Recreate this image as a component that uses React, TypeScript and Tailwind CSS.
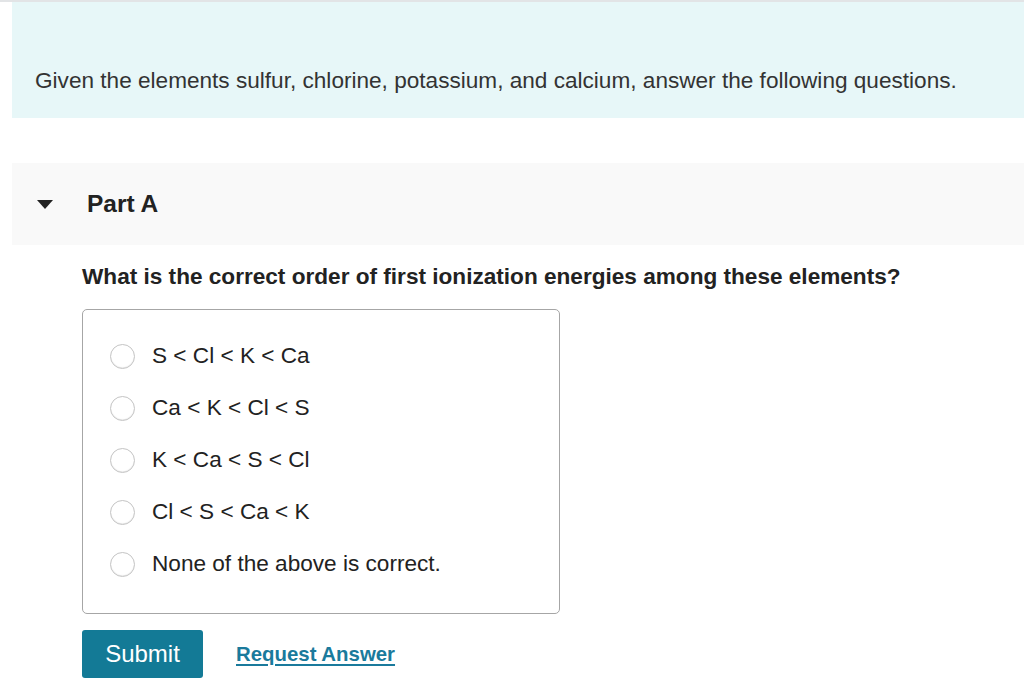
import React from 'react';

const OPTIONS = [
    'S < Cl < K < Ca',
    'Ca < K < Cl < S',
    'K < Ca < S < Cl',
    'Cl < S < Ca < K',
    'None of the above is correct.',
];

export default function App() {
    return (
        <div className="w-[1024px] h-[699px] bg-white overflow-hidden text-[#333333]" style={{ fontFamily: '"Liberation Sans", Arial, sans-serif' }}>
            <div className="h-[2px] bg-[#e2e4e6]" />

            {/* Intro */}
            <div className="ml-[12px] h-[116px] bg-[#e7f7f8] flex items-end pb-[25px] pl-[23px]">
                <p className="text-[22.6px] leading-[24px]">
                    Given the elements sulfur, chlorine, potassium, and calcium, answer the following questions.
                </p>
            </div>

            {/* Part header */}
            <div className="ml-[12px] mt-[45px] h-[82px] bg-[#f9f9f9] flex items-center">
                <svg width="16" height="9" viewBox="0 0 16 9" className="ml-[25px] mr-[34px]">
                    <polygon points="0,0 16,0 8,9" fill="#222" />
                </svg>
                <h2 className="text-[24.5px] leading-[28px] font-bold text-[#222]">Part A</h2>
            </div>

            <div className="pl-[82px]">
                <p className="mt-[20px] text-[22.6px] leading-[24px] font-bold text-[#222]">
                    What is the correct order of first ionization energies among these elements?
                </p>

                <div className="mt-[20px] w-[478px] h-[305px] border border-[#a6a6a6] rounded-[5px] pt-[20px] pl-[27px]">
                    {OPTIONS.map((opt) => (
                        <label key={opt} className="flex items-center h-[52px]">
                            <span className="w-[25px] h-[25px] rounded-full border border-[#c4c4c4] bg-white shadow-[inset_0_-1px_1px_rgba(0,0,0,0.08)]" />
                            <span className="ml-[17px] text-[22.6px] leading-[24px] text-[#222]">{opt}</span>
                        </label>
                    ))}
                </div>

                <div className="mt-[16px] flex items-center">
                    <button className="w-[121px] h-[48px] rounded-[3px] bg-[#137a96] text-white text-[24px] leading-[28px]">
                        Submit
                    </button>
                    <a className="ml-[33px] text-[20.4px] font-bold text-[#1a7a9c] underline underline-offset-[3px]">
                        Request Answer
                    </a>
                </div>
            </div>
        </div>
    );
}
